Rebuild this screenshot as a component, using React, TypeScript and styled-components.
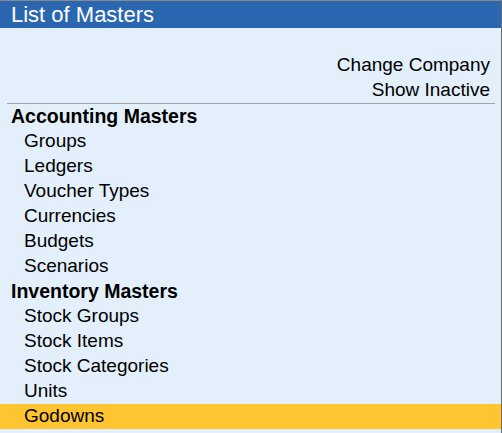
import { createGlobalStyle, styled } from 'styled-components';

const GlobalStyle = createGlobalStyle`
  html, body {
    margin: 0;
    padding: 0;
    background: #ffffff;
  }
  body {
    font-family: "Liberation Sans", Arial, sans-serif;
  }
`;

const Panel = styled.div`
  display: flex;
  flex-direction: column;
  width: 502px;
  height: 433px;
  box-sizing: border-box;
  border-top: 1px solid #8a8a8a;
  border-right: 1px solid #6a6a6a;
  background-color: #e3f0fb;
  overflow: hidden;
`;

const Title = styled.div`
  height: 27px;
  line-height: 27px;
  padding-left: 11px;
  font-size: 22px;
  color: #ffffff;
  background-color: #2b67b0;
`;

const Actions = styled.div`
  display: flex;
  flex-direction: column;
  align-items: flex-end;
  padding: 25px 11px 0 0;
`;

const Action = styled.div`
  height: 25px;
  line-height: 24px;
  font-size: 19px;
  color: #000;
`;

const Divider = styled.div`
  height: 1px;
  margin: 0 6px 0 7px;
  background-color: #a3a3a3;
`;

const List = styled.div`
  display: flex;
  flex-direction: column;
`;

const Row = styled.div<{ $heading?: boolean; $active?: boolean }>`
  height: 25px;
  line-height: 24px;
  padding-left: ${(p) => (p.$heading ? 11 : 24)}px;
  font-size: ${(p) => (p.$heading ? 19.5 : 19)}px;
  font-weight: ${(p) => (p.$heading ? 700 : 400)};
  color: #000;
  background-color: ${(p) => (p.$active ? '#fec531' : 'transparent')};
`;

const groups = [
  {
    title: 'Accounting Masters',
    items: ['Groups', 'Ledgers', 'Voucher Types', 'Currencies', 'Budgets', 'Scenarios'],
  },
  {
    title: 'Inventory Masters',
    items: ['Stock Groups', 'Stock Items', 'Stock Categories', 'Units', 'Godowns'],
  },
];

const selected = 'Godowns';

export default function App() {
  return (
    <>
      <GlobalStyle />
      <Panel>
        <Title>List of Masters</Title>
        <Actions>
          <Action>Change Company</Action>
          <Action>Show Inactive</Action>
        </Actions>
        <Divider />
        <List>
          {groups.map((g) => (
            <div key={g.title}>
              <Row $heading>{g.title}</Row>
              {g.items.map((item) => (
                <Row key={item} $active={item === selected}>
                  {item}
                </Row>
              ))}
            </div>
          ))}
        </List>
      </Panel>
    </>
  );
}
